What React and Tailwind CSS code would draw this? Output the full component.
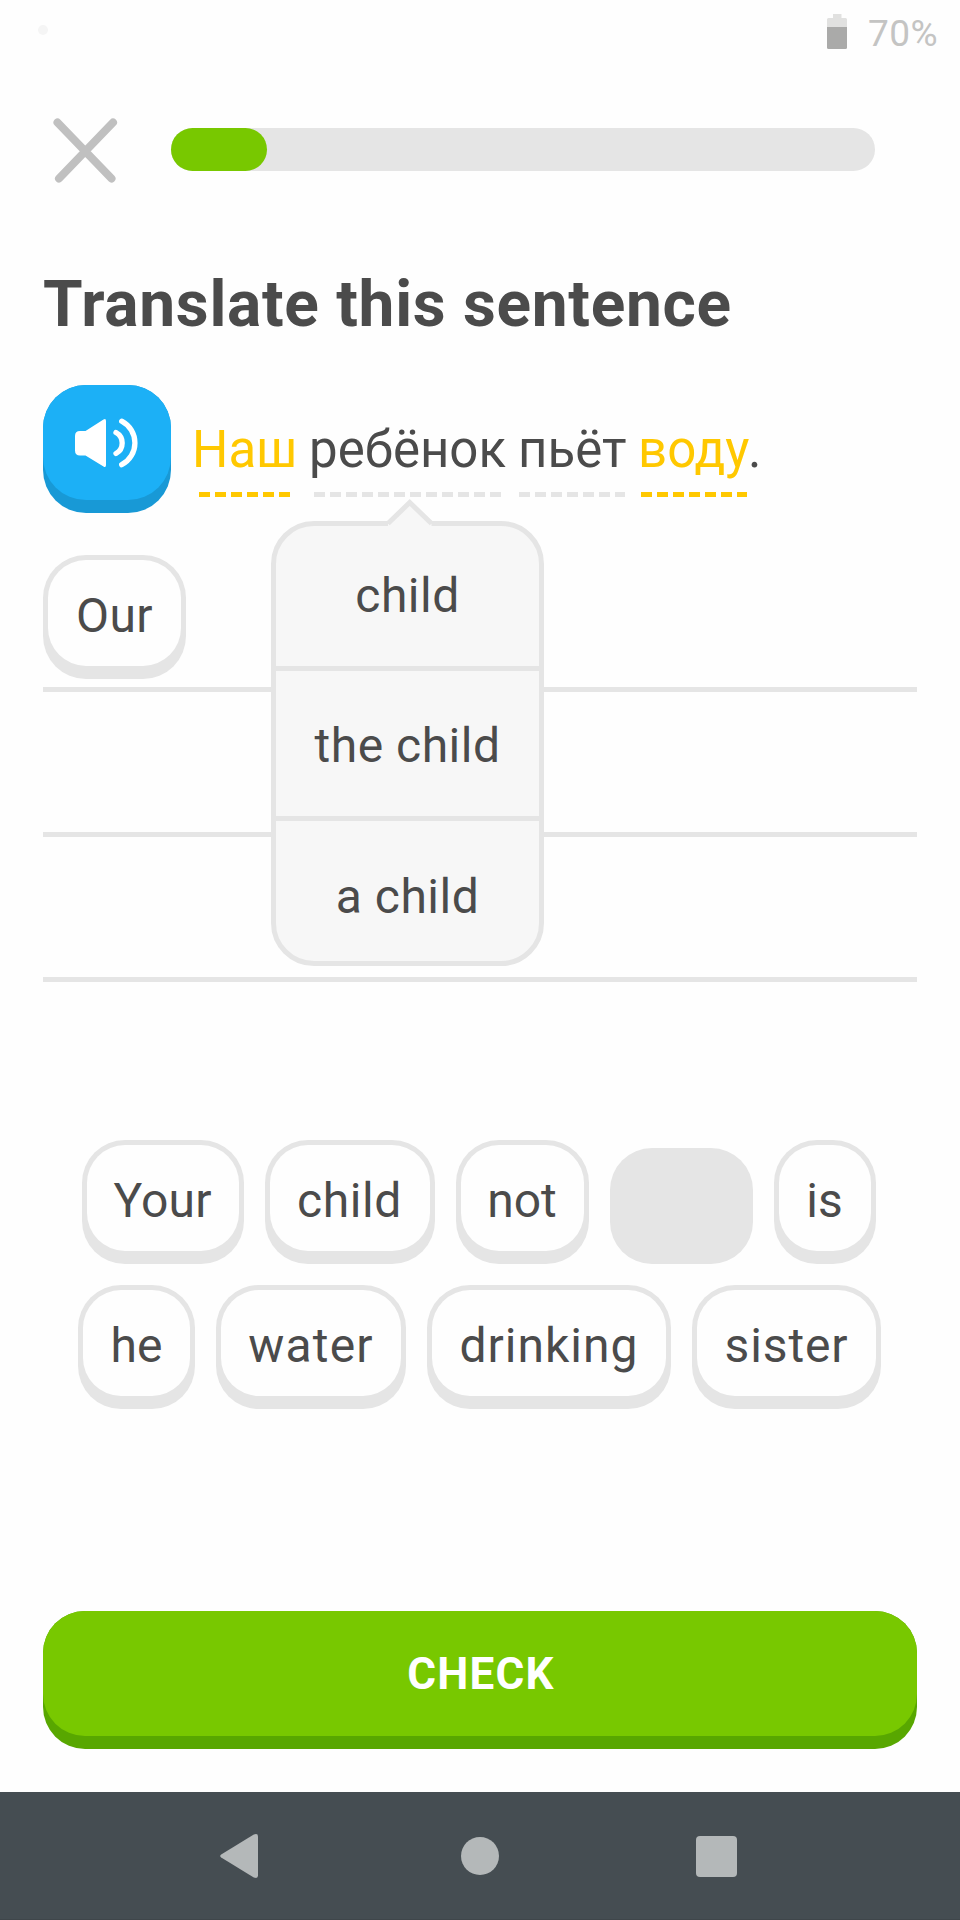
import React, { useState } from 'react';
import clsx from 'clsx';

const SENTENCE = [
    { text: 'Наш', isNew: true, box: 'w-[117px]', line: 'ml-[7px] w-[91px]' },
    { text: 'ребёнок', isNew: false, box: 'w-[209px]', line: 'ml-[5px] w-[187px]' },
    { text: 'пьёт', isNew: false, box: 'w-[120px]', line: 'ml-[1px] w-[106px]' },
    { text: 'воду', isNew: true, box: 'w-[110px]', line: 'ml-[3px] w-[106px]' },
];

const HINTS = [
    { text: 'child', row: 'h-[145px]' },
    { text: 'the child', row: 'h-[150px] pt-[5px]' },
    { text: 'a child', row: 'h-[140px] pt-[11px]' },
];

const BANK = [
    [
        { text: 'Your', width: 'w-[162px]', spacing: 'tracking-[0.2px]' },
        { text: 'child', width: 'w-[170px]', spacing: 'tracking-[0.6px]' },
        { text: 'not', width: 'w-[133px]' },
        { text: 'Our', width: 'w-[143px]' },
        { text: 'is', width: 'w-[102px]' },
    ],
    [
        { text: 'he', width: 'w-[117px]' },
        { text: 'water', width: 'w-[190px]', spacing: 'tracking-[1.2px]' },
        { text: 'drinking', width: 'w-[244px]', spacing: 'tracking-[1px]' },
        { text: 'sister', width: 'w-[189px]', spacing: 'tracking-[0.9px]' },
    ],
];

const StatusBar = () => (
    <div className="h-[128px] flex items-start justify-between pl-[38px] pr-[22px]">
        <div className="mt-[25px] w-[10px] h-[10px] rounded-full bg-[#f5f5f5]" />
        <div className="flex items-start text-[#c4c4c3]">
            <svg className="mt-[14px] w-5 h-[35px]" viewBox="0 0 20 35">
                <path d="M6 0h8.500v4H18.500a1.500 1.500 0 0 1 1.500 1.500V14H0V5.500A1.500 1.500 0 0 1 1.500 4H6z" fill="#e1e1e0" />
                <path d="M0 13h20v20.500a1.500 1.500 0 0 1-1.500 1.500h-17A1.500 1.500 0 0 1 0 33.500z" fill="#aaaaa9" />
            </svg>
            <span className="ml-[21px] mt-[14px] text-[37px] leading-10 tracking-[0.4px]">70%</span>
        </div>
    </div>
);

const Chip = ({ text, width, spacing }) => (
    <button className={clsx('h-[124px] rounded-[43px] bg-[#e5e5e5] px-[5px] pt-[5px] pb-[13px]', width, spacing)}>
        <span className="flex h-full items-center justify-center rounded-[38px] bg-[#fefefe] pt-[6px] text-5xl">
            {text}
        </span>
    </button>
);

const HintPopup = () => (
    <div className="absolute left-[228px] top-[136px] w-[273px] h-[445px] rounded-[43px] border-[5px] border-[#e5e5e5] bg-[#f7f7f7] text-5xl tracking-[0.5px]">
        <svg className="absolute left-[111px] -top-[28px] w-[46px] h-[30px]" viewBox="0 0 46 30">
            <path d="M1 30V26L22.700 4.500 44.500 26v4z" fill="#f7f7f7" />
            <path d="M1 25.500 22.700 4.500 44.500 25.500" fill="none" stroke="#e5e5e5" strokeWidth="5" />
        </svg>
        <div className="flex h-full flex-col divide-y-[5px] divide-[#e5e5e5]">
            {HINTS.map((hint) => (
                <div key={hint.text} className={clsx('flex items-center justify-center', hint.row)}>
                    {hint.text}
                </div>
            ))}
        </div>
    </div>
);

const NavBar = () => (
    <div className="h-32 bg-[#454d52] border-b border-[#3f464a] flex items-center pt-px pl-[220px]">
        <svg className="w-[38px] h-[44px]" viewBox="0 0 38 44">
            <path d="M1.200 20.400 33.800.600Q38-1 38 2.500v39q0 3.500-4.200 1.900L1.200 23.600q-2-1.600 0-3.200z" fill="#b4b8b9" />
        </svg>
        <div className="ml-[203px] w-[38px] h-[38px] rounded-full bg-[#b4b8b9]" />
        <div className="ml-[197px] w-[41px] h-[41px] rounded bg-[#b4b8b9]" />
    </div>
);

const App = () => {
    const [answer] = useState(['Our']);

    return (
        <div className="flex flex-col w-[960px] h-[1920px] overflow-hidden bg-[#fefefe] font-['Roboto',sans-serif] text-[#4b4b4b]">
            <StatusBar />

            <div className="flex h-[43px] pl-[53px]">
                <svg className="-mt-[10px] w-[65px] h-[65px] shrink-0" viewBox="0 0 65 65">
                    <path d="M4.500 4.500 58.500 60.500M60 4.500 6 60.500" fill="none" stroke="#c0c0c0" strokeWidth="8" strokeLinecap="round" />
                </svg>
                <div className="ml-[53px] w-[704px] h-[43px] rounded-full bg-[#e5e5e5]">
                    <div className="w-24 h-full rounded-full bg-[#78c800]" />
                </div>
            </div>

            <main className="flex-1 px-[43px]">
                <h1 className="mt-[96px] h-[76px] text-[64px] leading-[76px] font-bold tracking-[0.7px] whitespace-nowrap">
                    Translate this sentence
                </h1>

                <div className="relative mt-[42px]">
                    <div className="flex">
                        <button className="w-32 h-32 rounded-[43px] bg-[#1899d6] pb-[13px]">
                            <span className="block h-full rounded-[43px] bg-[#1cb0f6]">
                                <svg className="w-32 h-[115px]" viewBox="0 0 128 115">
                                    <path d="M32 51q0-5 5-5h5.500L60.500 34.500Q63 33 63 36V80q0 3-2.500 1.500L42.500 70.500H37q-5 0-5-5z" fill="#fff" />
                                    <path d="M73 47.500a12 12 0 0 1 0 21M78.700 36.200a24.500 24.500 0 0 1 0 43.500" fill="none" stroke="#fff" strokeWidth="5.300" strokeLinecap="round" />
                                </svg>
                            </span>
                        </button>

                        <div className="ml-[21px] mt-[35px] flex text-[51px] leading-[60px]">
                            {SENTENCE.map((word) => (
                                <div key={word.text} className={clsx('shrink-0', word.box)}>
                                    <span className={clsx('block', word.isNew && 'text-[#ffc800]')}>{word.text}</span>
                                    <div
                                        className={clsx(
                                            'mt-3 h-[5px]',
                                            word.line,
                                            word.isNew
                                                ? 'bg-[repeating-linear-gradient(90deg,#ffc800_0_11px,transparent_11px_16px)]'
                                                : 'bg-[repeating-linear-gradient(90deg,#e5e5e5_0_11px,transparent_11px_16px)]'
                                        )}
                                    />
                                </div>
                            ))}
                            <span>.</span>
                        </div>
                    </div>

                    <div className="mt-[34px]">
                        {[0, 1, 2].map((row) => (
                            <div
                                key={row}
                                className="h-[145px] border-b-[5px] border-[#e5e5e5] pt-2"
                            >
                                {row === 0 && answer.map((word) => <Chip key={word} text={word} width="w-[143px]" spacing="tracking-[0.5px]" />)}
                            </div>
                        ))}
                    </div>

                    <HintPopup />
                </div>

                <div className="mt-[158px] flex flex-col gap-[21px]">
                    {BANK.map((row, i) => (
                        <div key={i} className={clsx('flex items-end justify-center gap-[21px]', i === 0 ? 'pr-[3px]' : 'pr-px')}>
                            {row.map((word) =>
                                answer.includes(word.text) ? (
                                    <div key={word.text} className={clsx('h-[116px] rounded-[42px] bg-[#e5e5e5]', word.width)} />
                                ) : (
                                    <Chip key={word.text} {...word} />
                                )
                            )}
                        </div>
                    ))}
                </div>

                <button className="mt-[202px] block w-full h-[138px] rounded-[42px] bg-[#58a700] pb-[13px]">
                    <span className="flex h-full items-center justify-center rounded-[42px] bg-[#78c800] pt-px pl-[2px] text-[44px] font-bold tracking-[1.2px] text-white">
                        CHECK
                    </span>
                </button>
            </main>

            <NavBar />
        </div>
    );
};

export default App;
